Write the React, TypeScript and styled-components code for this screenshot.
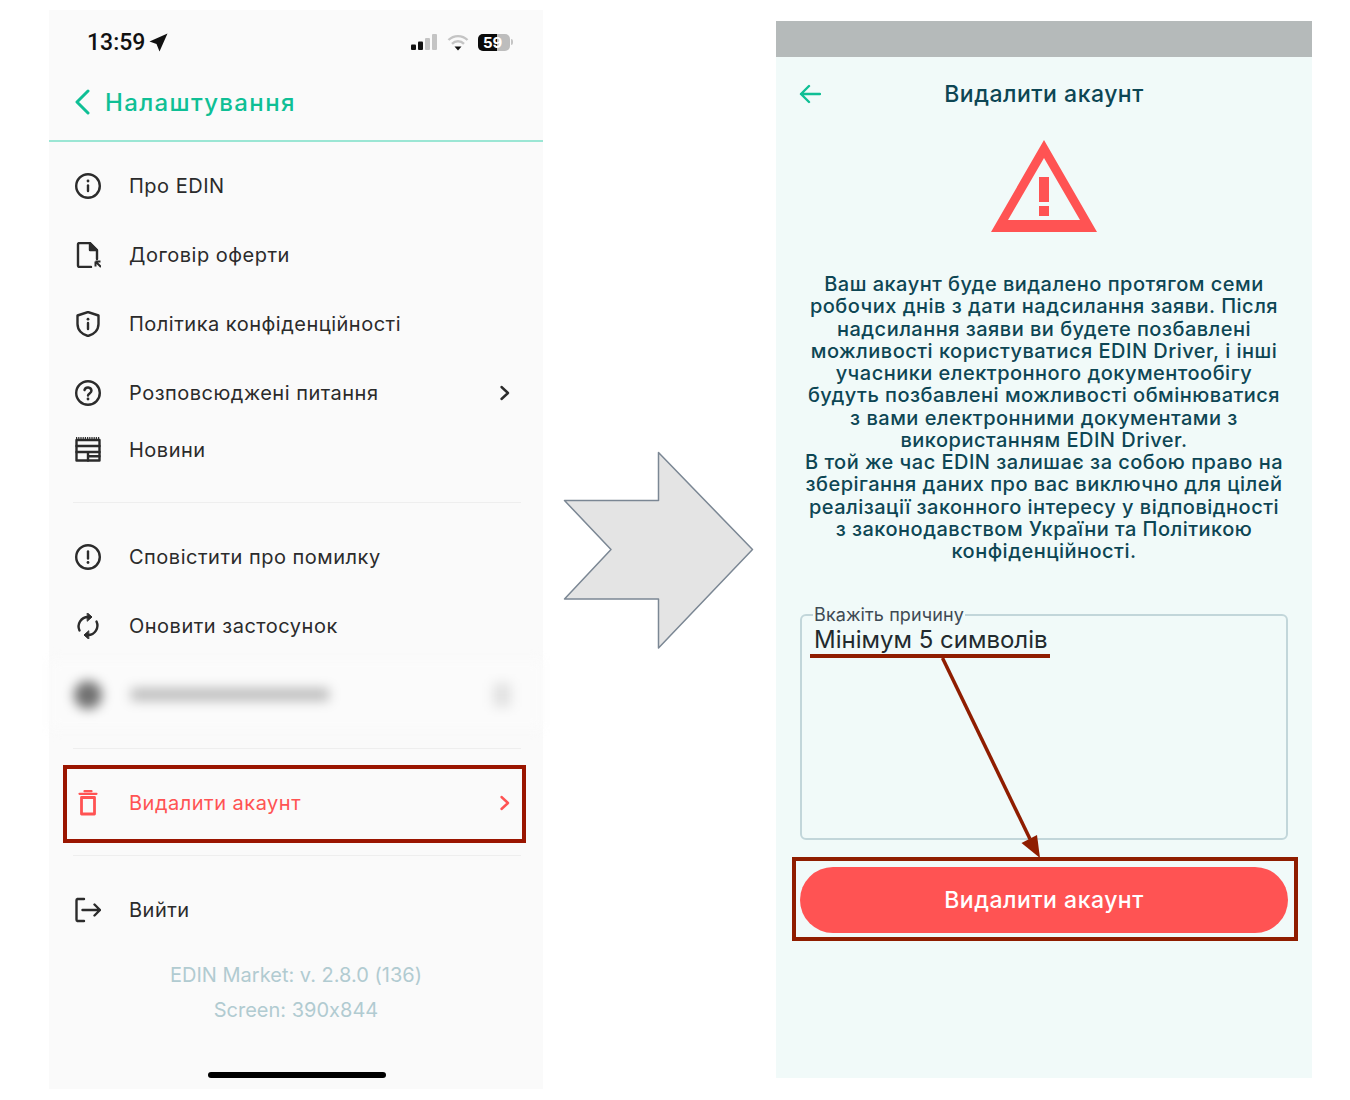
import type { ReactNode } from 'react';
import styled, { createGlobalStyle } from 'styled-components';

const ink = '#2b2b2b';
const danger = '#ff5353';
const mint = '#0fbf95';
const mark = '#8f1d00';

const GlobalStyle = createGlobalStyle`
  html, body {
    margin: 0;
    background: #ffffff;
  }
  * {
    box-sizing: border-box;
  }
`;

type IconProps = { color?: string };

function Glyph({ color = ink, children }: IconProps & { children: ReactNode }) {
  return (
    <svg width="26" height="26" viewBox="0 0 26 26" fill="none" stroke={color} strokeWidth="2.400" strokeLinecap="round" strokeLinejoin="round">
      {children}
    </svg>
  );
}

const InfoIcon = () => (
  <Glyph>
    <circle cx="13" cy="13" r="11.800" />
    <path d="M13 12.500v5.500" />
    <circle cx="13" cy="8" r="1.400" fill={ink} stroke="none" />
  </Glyph>
);

const OfferIcon = () => (
  <Glyph>
    <path d="M16 25H4.500A1.500 1.500 0 0 1 3 23.500V2.500A1.500 1.500 0 0 1 4.500 1H15l7 7v9" />
    <path d="M15 1.500V8h6.500z" fill={ink} />
    <path d="M20.500 19.500h5M20.500 19.500v5M20.500 19.500l5.500 5.500" strokeWidth="2" strokeLinecap="butt" />
  </Glyph>
);

const ShieldIcon = () => (
  <Glyph>
    <path d="M13 1l10.500 3.500v8.500c0 6-4.500 10.500-10.500 12C7 23.500 2.500 19 2.500 13V4.500z" />
    <path d="M13 12v6" />
    <circle cx="13" cy="8.200" r="1.400" fill={ink} stroke="none" />
  </Glyph>
);

const HelpIcon = () => (
  <Glyph>
    <circle cx="13" cy="13" r="11.800" />
    <path d="M9.500 10a3.600 3.600 0 0 1 7 .8c0 2.400-3.500 2.800-3.500 4.700" />
    <circle cx="13" cy="19" r="1.400" fill={ink} stroke="none" />
  </Glyph>
);

const NewsIcon = () => (
  <Glyph>
    <path d="M1 1.200h24" strokeDasharray="1.200 1" strokeLinecap="butt" strokeWidth="2.400" />
    <path d="M1.500 3h23v20.500h-23z" />
    <path d="M1.500 9h23M1.500 15h23M13 15v8.500M13 19.200h11.500" />
  </Glyph>
);

const AlertIcon = () => (
  <Glyph>
    <circle cx="13" cy="13" r="11.800" />
    <path d="M13 7.500v7" />
    <circle cx="13" cy="18.500" r="1.400" fill={ink} stroke="none" />
  </Glyph>
);

const SyncIcon = () => (
  <Glyph>
    <path d="M4.500 17.500A9.500 9.500 0 0 1 13 4h2" />
    <path d="M21.500 8.500A9.500 9.500 0 0 1 13 22h-2" />
    <path d="M12.500 0l4.500 4-4.500 4z" fill={ink} strokeWidth="1" />
    <path d="M13.500 26L9 22l4.500-4z" fill={ink} strokeWidth="1" />
  </Glyph>
);

const TrashIcon = () => (
  <Glyph color={danger}>
    <path d="M6.500 7.500h13v16.500h-13z" strokeWidth="2.800" />
    <path d="M4.500 3.800h17M9.500 1.200h7" strokeWidth="2.200" />
  </Glyph>
);

const ExitIcon = () => (
  <Glyph>
    <path d="M9 2H2.500A1.500 1.500 0 0 0 1.500 3.500v19a1.500 1.500 0 0 0 1 1.500H9" />
    <path d="M7.500 13H25M19.500 7.500L25 13l-5.500 5.500" />
  </Glyph>
);

const Chevron = ({ color = ink }: IconProps) => (
  <svg width="12" height="16" viewBox="0 0 12 16" fill="none" stroke={color} strokeWidth="2.400" strokeLinecap="round" strokeLinejoin="round">
    <path d="M2.500 2l6.500 6-6.500 6" />
  </svg>
);

type MenuEntry = {
  label: string;
  icon: ReactNode;
  height?: number;
  chevron?: boolean;
};

const topEntries: MenuEntry[] = [
  { label: 'Про EDIN', icon: <InfoIcon /> },
  { label: 'Договір оферти', icon: <OfferIcon /> },
  { label: 'Політика конфіденційності', icon: <ShieldIcon /> },
  { label: 'Розповсюджені питання', icon: <HelpIcon />, chevron: true },
  { label: 'Новини', icon: <NewsIcon />, height: 45 },
];

const noticeLines = [
  'Ваш акаунт буде видалено протягом семи',
  'робочих днів з дати надсилання заяви. Після',
  'надсилання заяви ви будете позбавлені',
  'можливості користуватися EDIN Driver, і інші',
  'учасники електронного документообігу',
  'будуть позбавлені можливості обмінюватися',
  'з вами електронними документами з',
  'використанням EDIN Driver.',
  'В той же час EDIN залишає за собою право на',
  'зберігання даних про вас виключно для цілей',
  'реалізації законного інтересу у відповідності',
  'з законодавством України та Політикою',
  'конфіденційності.',
];

function MenuRow({ label, icon, height, chevron }: MenuEntry) {
  return (
    <Row $height={height}>
      <IconSlot>{icon}</IconSlot>
      <RowLabel>{label}</RowLabel>
      {chevron && (
        <ChevronSlot>
          <Chevron />
        </ChevronSlot>
      )}
    </Row>
  );
}

function App() {
  return (
    <Page>
      <GlobalStyle />

      <Phone>
        <StatusBar>
          <Clock>13:59</Clock>
          <svg width="19" height="19" viewBox="0 0 19 19" fill="#111">
            <path d="M18.500 .5L.5 8.500 7.500 11l3 7.500z" />
          </svg>
          <StatusIcons>
            <svg width="27" height="16" viewBox="0 0 27 16">
              <rect x="0" y="10.500" width="5" height="5.500" rx="1" fill="#111" />
              <rect x="7" y="7.500" width="5" height="8.500" rx="1" fill="#111" />
              <rect x="14" y="4" width="5" height="12" rx="1" fill="#c4c4c4" />
              <rect x="21" y="0" width="5" height="16" rx="1" fill="#c4c4c4" />
            </svg>
            <svg width="22" height="17" viewBox="0 0 22 17" fill="none">
              <path d="M1.500 6a13.500 13.500 0 0 1 19 0" stroke="#c4c4c4" strokeWidth="2.400" />
              <path d="M5 9.800a8.500 8.500 0 0 1 12 0" stroke="#c4c4c4" strokeWidth="2.400" />
              <path d="M7.500 12.500h7L11 16.500z" fill="#111" />
            </svg>
            <Battery>
              <BatteryFill>59</BatteryFill>
            </Battery>
          </StatusIcons>
        </StatusBar>

        <NavBar>
          <svg width="16" height="26" viewBox="0 0 16 26" fill="none" stroke={mint} strokeWidth="3" strokeLinecap="round" strokeLinejoin="round">
            <path d="M14 2L3 13l11 11" />
          </svg>
          <NavTitle>Налаштування</NavTitle>
        </NavBar>

        <Menu>
          {topEntries.map((entry) => (
            <MenuRow key={entry.label} {...entry} />
          ))}

          <Divider $above={30} $below={19} />

          <MenuRow label="Сповістити про помилку" icon={<AlertIcon />} />
          <MenuRow label="Оновити застосунок" icon={<SyncIcon />} />

          <BlurredRow aria-hidden="true">
            <BlurredDot />
            <BlurredText />
            <BlurredEnd />
          </BlurredRow>

          <Divider $above={19} $below={19} />

          <Row>
            <IconSlot>
              <TrashIcon />
            </IconSlot>
            <RowLabel $danger>Видалити акаунт</RowLabel>
            <ChevronSlot>
              <Chevron color={danger} />
            </ChevronSlot>
            <RowMark />
          </Row>

          <Divider $above={18} $below={19} />

          <MenuRow label="Вийти" icon={<ExitIcon />} />
        </Menu>

        <VersionBlock>
          <VersionLine>EDIN Market: v. 2.8.0 (136)</VersionLine>
          <VersionLine>Screen: 390x844</VersionLine>
        </VersionBlock>

        <HomeIndicator />
      </Phone>

      <ArrowSlot>
        <svg width="192" height="200" viewBox="0 0 192 200">
          <path d="M1.500 49.500h94v-48l94 97-94 98.500V148H1.500l46.500-49.500z" fill="#e4e4e4" stroke="#7b8794" strokeWidth="1.500" strokeLinejoin="round" />
        </svg>
      </ArrowSlot>

      <Screen>
        <GreyBar />
        <ScreenHeader>
          <BackArrow>
            <svg width="22" height="20" viewBox="0 0 22 20" fill="none" stroke={mint} strokeWidth="2.400" strokeLinecap="round" strokeLinejoin="round">
              <path d="M21 10H2M10 2l-8 8 8 8" />
            </svg>
          </BackArrow>
          <ScreenTitle>Видалити акаунт</ScreenTitle>
        </ScreenHeader>

        <WarningWrap>
          <svg width="106" height="92" viewBox="0 0 106 92">
            <path fillRule="evenodd" d="M53 0l53 92H0zM53 18L17 80h72z" fill={danger} />
            <rect x="48" y="37" width="10" height="25" fill={danger} />
            <rect x="48" y="66" width="10" height="10" fill={danger} />
          </svg>
        </WarningWrap>

        <Notice>
          {noticeLines.map((line) => (
            <NoticeLine key={line}>{line}</NoticeLine>
          ))}
        </Notice>

        <FormArea>
          <ReasonField>
            <ReasonLegend>Вкажіть причину</ReasonLegend>
            <Placeholder>Мінімум 5 символів</Placeholder>
          </ReasonField>

          <DeleteButton type="button">Видалити акаунт</DeleteButton>

          <PlaceholderMark />
          <ButtonMark />
          <Callout width="110" height="205" viewBox="0 0 110 205">
            <path d="M2.500 3L90 184" stroke={mark} strokeWidth="3.500" fill="none" />
            <path d="M81.500 188L97 180l3 23z" fill={mark} />
          </Callout>
        </FormArea>
      </Screen>
    </Page>
  );
}

export default App;

const Page = styled.div`
  display: flex;
  align-items: flex-start;
  width: 1350px;
  height: 1100px;
  padding: 10px 0 0 49px;
  font-family: 'Inter', 'Liberation Sans', sans-serif;
  font-feature-settings: 'calt' 0;
  overflow: hidden;
`;

const Phone = styled.section`
  display: flex;
  flex-direction: column;
  flex: none;
  width: 494px;
  height: 1079px;
  background: #fafafa;
`;

const StatusBar = styled.div`
  display: flex;
  align-items: center;
  gap: 4px;
  height: 64px;
  padding: 0 33px 0 38px;
`;

const Clock = styled.span`
  color: #111111;
  font-family: 'Roboto', 'Liberation Sans', sans-serif;
  font-size: 23px;
  font-weight: 500;
`;

const StatusIcons = styled.div`
  display: flex;
  align-items: center;
  gap: 9px;
  margin-left: auto;
`;

const Battery = styled.div`
  position: relative;
  width: 32px;
  height: 17px;
  border-radius: 5px;
  background: #bdbdbd;

  &::after {
    content: '';
    position: absolute;
    top: 5px;
    right: -3px;
    width: 2px;
    height: 6px;
    border-radius: 0 2px 2px 0;
    background: #c4c4c4;
  }
`;

const BatteryFill = styled.div`
  width: 19px;
  height: 17px;
  padding-left: 5px;
  border-radius: 5px 0 0 5px;
  background: #0b0b0b;
  color: #ffffff;
  font-size: 15px;
  font-weight: 700;
  line-height: 17px;
  white-space: nowrap;
`;

const NavBar = styled.header`
  display: flex;
  align-items: center;
  gap: 15px;
  height: 68px;
  padding: 0 0 10px 25px;
  border-bottom: 2px solid #9be6d4;
`;

const NavTitle = styled.h1`
  margin: 0;
  color: ${mint};
  font-size: 24px;
  font-weight: 500;
  letter-spacing: 1.35px;
`;

const Menu = styled.nav`
  display: flex;
  flex-direction: column;
  padding-top: 9px;
`;

const Row = styled.div<{ $height?: number }>`
  position: relative;
  display: flex;
  align-items: center;
  height: ${({ $height }) => $height ?? 69}px;
  padding: 0 32px 0 26px;
`;

const IconSlot = styled.span`
  display: flex;
  flex: none;
  width: 26px;
  height: 26px;
`;

const RowLabel = styled.span<{ $danger?: boolean }>`
  margin-left: 28px;
  color: ${({ $danger }) => ($danger ? danger : ink)};
  font-size: 20px;
  letter-spacing: 0.5px;
`;

const ChevronSlot = styled.span`
  display: flex;
  margin-left: auto;
`;

const RowMark = styled.span`
  position: absolute;
  top: -3px;
  right: 17px;
  bottom: -6px;
  left: 14px;
  border: 4px solid #9a1500;
`;

const BlurredRow = styled(Row)`
  background: #fbfbfb;
  filter: blur(6px);
`;

const BlurredDot = styled.span`
  width: 28px;
  height: 28px;
  margin-left: -1px;
  border-radius: 50%;
  background: #707070;
`;

const BlurredText = styled.span`
  width: 198px;
  height: 13px;
  margin-left: 29px;
  background: #bdbdbd;
`;

const BlurredEnd = styled.span`
  width: 18px;
  height: 24px;
  margin-left: auto;
  background: #e2e2e2;
`;

const Divider = styled.hr<{ $above: number; $below: number }>`
  width: 448px;
  height: 1px;
  margin: ${({ $above, $below }) => `${$above}px 0 ${$below}px 24px`};
  border: 0;
  background: #eeeeee;
`;

const VersionBlock = styled.div`
  margin-top: 14px;
  text-align: center;
`;

const VersionLine = styled.p`
  margin: 0;
  color: #b1cbd1;
  font-size: 20px;
  line-height: 35px;
`;

const HomeIndicator = styled.div`
  width: 178px;
  height: 6px;
  margin: 44px 0 0 159px;
  border-radius: 3px;
  background: #000000;
`;

const ArrowSlot = styled.div`
  flex: none;
  margin: 441px 0 0 20px;
  line-height: 0;
`;

const Screen = styled.section`
  display: flex;
  flex-direction: column;
  flex: none;
  width: 536px;
  height: 1057px;
  margin: 11px 0 0 21px;
  background: #f1faf9;
`;

const GreyBar = styled.div`
  flex: none;
  height: 36px;
  background: #b5baba;
`;

const ScreenHeader = styled.header`
  position: relative;
  display: flex;
  align-items: center;
  justify-content: center;
  height: 74px;
`;

const BackArrow = styled.span`
  position: absolute;
  top: 27px;
  left: 23px;
  line-height: 0;
`;

const ScreenTitle = styled.h2`
  margin: 0;
  color: #0d4654;
  font-size: 23px;
  font-weight: 500;
  letter-spacing: 0.5px;
`;

const WarningWrap = styled.div`
  display: flex;
  justify-content: center;
  margin-top: 9px;
`;

const Notice = styled.div`
  margin-top: 41px;
  color: #0d4654;
  font-size: 20px;
  font-weight: 500;
  letter-spacing: 0.48px;
  line-height: 22.25px;
  text-align: center;
`;

const NoticeLine = styled.div`
  white-space: nowrap;
`;

const FormArea = styled.div`
  position: relative;
  display: flex;
  flex-direction: column;
  padding: 0 24px;
  margin-top: 43px;
`;

const ReasonField = styled.fieldset`
  height: 235px;
  margin: 0;
  padding: 0 12px;
  border: 2px solid #c2d6da;
  border-radius: 6px;
`;

const ReasonLegend = styled.legend`
  margin-left: -1px;
  padding: 0 1px;
  color: #3f4a54;
  font-size: 18px;
  letter-spacing: 0.1px;
  line-height: 20px;
`;

const Placeholder = styled.div`
  color: #222a2e;
  font-size: 24px;
  line-height: 30px;
`;

const DeleteButton = styled.button`
  height: 66px;
  margin-top: 27px;
  border: 0;
  border-radius: 33px;
  background: ${danger};
  color: #ffffff;
  font-family: inherit;
  font-size: 23px;
  font-weight: 500;
  letter-spacing: 0.5px;
`;

const PlaceholderMark = styled.span`
  position: absolute;
  top: 49px;
  left: 34px;
  width: 240px;
  height: 4px;
  background: ${mark};
`;

const ButtonMark = styled.span`
  position: absolute;
  top: 252px;
  left: 16px;
  width: 506px;
  height: 84px;
  border: 4px solid ${mark};
`;

const Callout = styled.svg`
  position: absolute;
  top: 50px;
  left: 164px;
`;
